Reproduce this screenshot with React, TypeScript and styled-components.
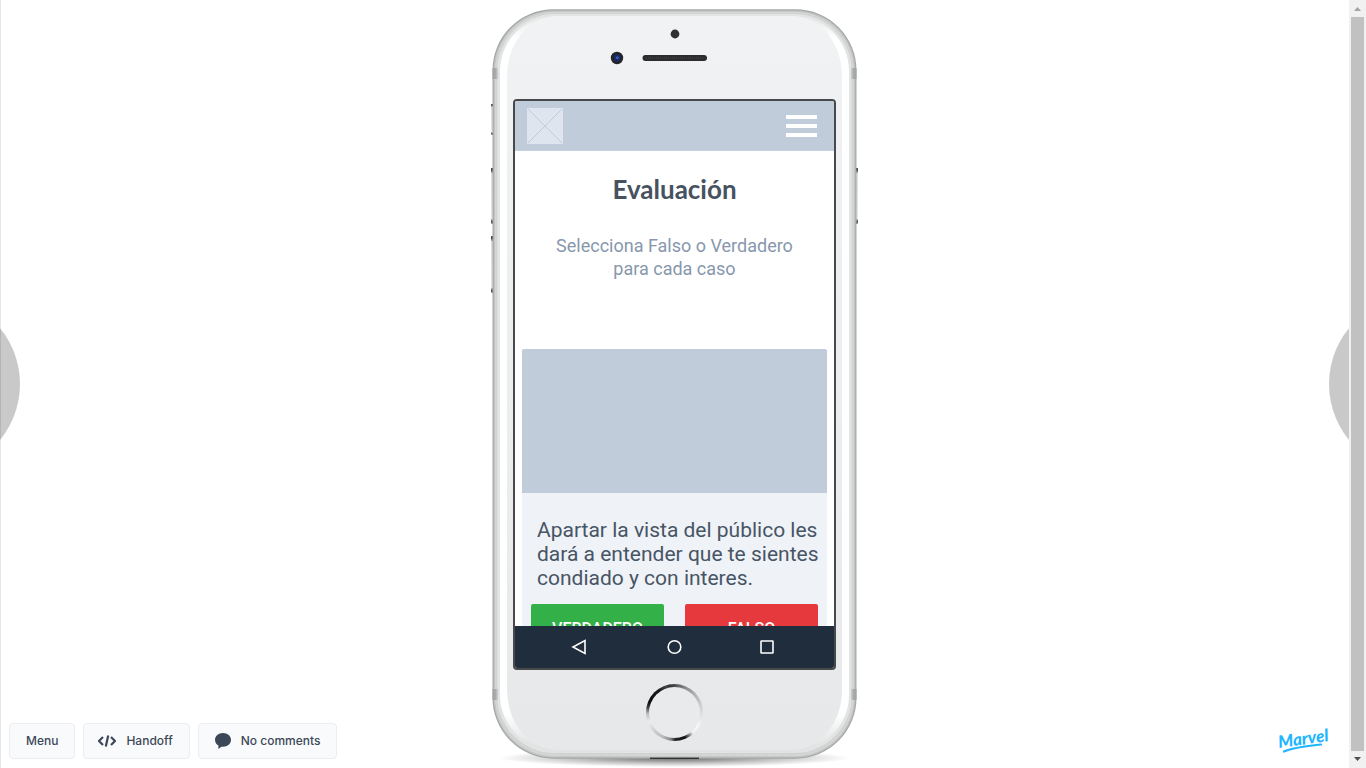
import React from "react";
import styled, { createGlobalStyle } from "styled-components";

const GlobalStyle = createGlobalStyle`
  *, *::before, *::after { box-sizing: border-box; }
  body { margin: 0; background: #fff; }
  button { font: inherit; color: inherit; border: 0; padding: 0; background: none; cursor: pointer; }
  h1, p { margin: 0; font-weight: inherit; }
`;

const Page = styled.div`
  display: flex;
  height: 100vh;
  overflow: hidden;
  font-family: Roboto, "Liberation Sans", sans-serif;
`;

const Stage = styled.main`
  position: relative;
  flex: 1;
  display: grid;
  grid-template-columns: 1fr auto 1fr;
  align-items: center;
  overflow: hidden;
  box-shadow: inset 1px 0 #e6e6e6;
`;

const PageTurn = styled.button<{ $side: "left" | "right" }>`
  position: absolute;
  top: calc(50% - 88px);
  ${(p) => p.$side}: -156px;
  width: 176px;
  height: 176px;
  border-radius: 50%;
  background: rgba(0, 0, 0, 0.21);
`;

const Toolbar = styled.nav`
  align-self: end;
  display: flex;
  gap: 8px;
  padding: 9px;
`;

const ToolButton = styled.button<{ $icon?: boolean }>`
  display: flex;
  align-items: center;
  gap: 9px;
  height: 36px;
  padding: 0 16px 0 ${(p) => (p.$icon ? 13 : 16)}px;
  border: 1px solid #ebedf0;
  border-radius: 4px;
  background: #f9fafc;
  color: #3c4858;
  font: 500 12px/16px Inter, "Liberation Sans", sans-serif;
  white-space: nowrap;
`;

const BrandLink = styled.a`
  align-self: end;
  justify-self: end;
  display: block;
  padding: 0 16px 9px 0;
  svg { display: block; overflow: visible; }
`;

const Device = styled.section`
  position: relative;
  display: flex;
  flex-direction: column;
  align-items: center;
  gap: 14px;
  width: 367px;
  height: 750px;
  padding-top: 90px;
`;

const Shell = styled.svg`
  position: absolute;
  inset: 0;
  overflow: visible;
`;

const Screen = styled.div`
  position: relative;
  display: flex;
  flex-direction: column;
  width: 323px;
  height: 571px;
  border: 2px solid #47494b;
  border-radius: 4px;
  background: #fff;
  overflow: hidden;
`;

const HomeButton = styled.button`
  position: relative;
  width: 57px;
  height: 57px;
  padding: 3px;
  border-radius: 50%;
  background: conic-gradient(
    #4a4a4a 0deg, #8d8d8d 25deg, #bbb 55deg, #dcdcdc 90deg, #f6f6f6 120deg,
    #f0f0f0 138deg, #777 148deg, #111 158deg, #222 178deg, #888 188deg,
    #bbb 205deg, #ccc 225deg, #eee 250deg, #bbb 268deg, #444 280deg,
    #0c0c0c 292deg, #1a1a1a 325deg, #444 342deg, #333 350deg, #4a4a4a 360deg
  );
  &::after {
    content: "";
    display: block;
    height: 100%;
    border-radius: 50%;
    background: #e9eaec;
  }
`;

const AppBar = styled.header`
  flex: none;
  display: flex;
  align-items: center;
  justify-content: space-between;
  height: 50px;
  padding: 0 17px 0 12px;
  background: #c0ccda;
  border-bottom: 1px solid #c6d1de;
  svg { display: block; }
`;

const MenuButton = styled.button`
  display: flex;
  flex-direction: column;
  gap: 5px;
  width: 31px;
`;

const MenuBar = styled.span`
  height: 4px;
  background: #fff;
`;

const Content = styled.div`
  flex: 1;
  min-height: 0;
  overflow: hidden;
  padding: 22px 7px 0;
`;

const Title = styled.h1`
  color: #475260;
  font: 700 26px/32px Lato, sans-serif;
  text-align: center;
`;

const Intro = styled.p`
  margin-top: 29px;
  color: #8797ad;
  font-size: 18px;
  line-height: 23px;
  text-align: center;
`;

const Card = styled.article`
  margin-top: 69px;
  border-radius: 2px;
  background: #eff2f7;
  overflow: hidden;
`;

const CardImage = styled.div`
  height: 144px;
  background: #c0ccda;
`;

const Statement = styled.p`
  padding: 25px 0 14px 15px;
  color: #475565;
  font-size: 21px;
  line-height: 24px;
  white-space: nowrap;
`;

const Answers = styled.div`
  display: grid;
  grid-template-columns: 1fr 1fr;
  gap: 21px;
  padding: 0 9px 16px;
`;

const Answer = styled.button<{ $color: string }>`
  height: 48px;
  border-radius: 2px;
  background: ${(p) => p.$color};
  color: #fff;
  font-size: 16px;
  font-weight: 500;
`;

const SystemBar = styled.nav`
  flex: none;
  display: flex;
  align-items: center;
  justify-content: space-between;
  height: 42px;
  padding: 0 58px 0 55px;
  background: #1f2d3d;
  svg { display: block; fill: none; stroke: #fff; stroke-width: 1.6; }
`;

const ScrollTrack = styled.div`
  flex: none;
  display: flex;
  flex-direction: column;
  align-items: center;
  width: 17px;
  background: #f1f1f1;
`;

const ScrollArrow = styled.button`
  height: 17px;
  svg { display: block; }
`;

const ScrollThumb = styled.div`
  flex: 1;
  width: 13px;
  background: #c1c1c1;
`;

function PhoneShell() {
  return (
    <Shell width="367" height="750" viewBox="0 0 367 750" aria-hidden="true">
      <defs>
        <linearGradient id="face" x2="0" y2="1">
          <stop offset="0" stopColor="#f1f2f4" />
          <stop offset="1" stopColor="#e7e8ea" />
        </linearGradient>
        <linearGradient id="gloss" x2="0" y2="1">
          <stop offset="0" stopColor="#e6e7e7" />
          <stop offset="0.03" stopColor="#fff" />
          <stop offset="0.95" stopColor="#fff" />
          <stop offset="1" stopColor="#dedfe0" />
        </linearGradient>
        <linearGradient id="bandLeft">
          <stop offset="0" stopColor="#a3a4a6" />
          <stop offset="0.5" stopColor="#a6a7a9" />
          <stop offset="1" stopColor="#cfd0d1" />
        </linearGradient>
        <linearGradient id="bandRight">
          <stop offset="0" stopColor="#cfd0d1" />
          <stop offset="0.5" stopColor="#a6a7a9" />
          <stop offset="1" stopColor="#a3a4a6" />
        </linearGradient>
        <linearGradient id="tip" x2="0" y2="1">
          <stop offset="0" stopColor="#222" />
          <stop offset="0.04" stopColor="#444" />
          <stop offset="0.1" stopColor="#ddd" />
          <stop offset="0.9" stopColor="#e6e6e6" />
          <stop offset="0.96" stopColor="#444" />
          <stop offset="1" stopColor="#999" />
        </linearGradient>
        <radialGradient id="shadow">
          <stop offset="0" stopColor="#000" stopOpacity="0.6" />
          <stop offset="0.6" stopColor="#000" stopOpacity="0.22" />
          <stop offset="1" stopColor="#000" stopOpacity="0" />
        </radialGradient>
      </defs>
      <ellipse cx="183" cy="749" rx="176" ry="9" fill="url(#shadow)" />
      <g fill="url(#tip)">
        <rect x="0" y="95" width="3" height="31" rx="1" />
        <rect x="0" y="159" width="3" height="56" rx="1" />
        <rect x="0" y="227" width="3" height="57" rx="1" />
        <rect x="364" y="159" width="3" height="56" rx="1" />
      </g>
      <rect x="1.5" y="0.3" width="364" height="749.4" rx="61" fill="#a6a7a7" />
      <rect x="2.7" y="1.5" width="361.6" height="747" rx="60" fill="#c2c3c3" />
      <rect x="4" y="2.8" width="359" height="744.4" rx="59" fill="#d4d5d5" />
      <rect x="5.2" y="4.2" width="356.6" height="741" rx="58" fill="#d0d1d1" />
      <rect x="6.2" y="5" width="354.6" height="739" rx="57" fill="#e2e3e3" />
      <rect x="9" y="7" width="349" height="734" rx="55" fill="url(#gloss)" />
      <path
        d="M66 7H301A50 60 0 0 1 351 67V681A50 60 0 0 1 301 741H66A50 60 0 0 1 16 681V67A50 60 0 0 1 66 7Z"
        fill="url(#face)"
      />
      <g fill="url(#bandLeft)">
        <rect x="1.5" y="59" width="5.5" height="11" />
        <rect x="1.5" y="680" width="5.5" height="11" />
      </g>
      <g fill="url(#bandRight)">
        <rect x="360" y="59" width="5.5" height="11" />
        <rect x="360" y="680" width="5.5" height="11" />
      </g>
      <rect x="159" y="748.6" width="49" height="1.4" fill="#333" />
      <circle cx="184" cy="25" r="4.4" fill="#2f3032" />
      <circle cx="126" cy="49" r="6.2" fill="#232427" />
      <circle cx="126" cy="49" r="3.4" fill="#1c2c6b" />
      <circle cx="126.3" cy="48.8" r="1.3" fill="#3e66c4" />
      <rect x="151.5" y="46" width="64.5" height="6" rx="3" fill="#2c2c2e" />
      <path d="M155 49H213" stroke="#3a3a3a" strokeWidth="2" strokeDasharray="1 1" />
    </Shell>
  );
}

export default function App() {
  return (
    <Page>
      <GlobalStyle />
      <Stage>
        <Toolbar aria-label="Prototype tools">
          <ToolButton>Menu</ToolButton>
          <ToolButton $icon>
            <svg width="20" height="12" viewBox="0 0 20 12" fill="none" stroke="#3c4858" strokeWidth="2.2" strokeLinejoin="round" aria-hidden="true">
              <path d="M6 2 2 6l4 4M14 2l4 4-4 4M11.200 .5 8.800 11.500" />
            </svg>
            Handoff
          </ToolButton>
          <ToolButton $icon>
            <svg width="20" height="16" viewBox="0 0 20 16" fill="#3c4858" aria-hidden="true">
              <path d="M11 0C6.400 0 3 3 3 6.800c0 2.600 1.300 4.600 3.400 5.800V16l3-2.300c.5.100 1 .1 1.600.1 4.600 0 8-3.200 8-7S15.600 0 11 0Z" />
            </svg>
            No comments
          </ToolButton>
        </Toolbar>

        <Device aria-label="Prototype">
          <PhoneShell />
          <Screen>
            <AppBar>
              <svg width="36" height="36" viewBox="0 0 36 36" aria-hidden="true">
                <rect width="36" height="36" rx="1" fill="#dee5ee" />
                <path d="M1 1 35 35M35 1 1 35" stroke="#c0ccda" />
              </svg>
              <MenuButton aria-label="Menú">
                <MenuBar />
                <MenuBar />
                <MenuBar />
              </MenuButton>
            </AppBar>
            <Content>
              <Title>Evaluación</Title>
              <Intro>
                Selecciona Falso o Verdadero
                <br />
                para cada caso
              </Intro>
              <Card>
                <CardImage />
                <Statement>
                  Apartar la vista del público les
                  <br />
                  dará a entender que te sientes
                  <br />
                  condiado y con interes.
                </Statement>
                <Answers>
                  <Answer $color="#34b049">VERDADERO</Answer>
                  <Answer $color="#e6393d">FALSO</Answer>
                </Answers>
              </Card>
            </Content>
            <SystemBar aria-label="System">
              <button aria-label="Back">
                <svg width="18" height="18" viewBox="0 0 18 18"><path d="M15 2.500V15.500L3 9Z" /></svg>
              </button>
              <button aria-label="Home">
                <svg width="18" height="18" viewBox="0 0 18 18"><circle cx="10.500" cy="9" r="6.300" /></svg>
              </button>
              <button aria-label="Recents">
                <svg width="18" height="18" viewBox="0 0 18 18"><rect x="3" y="3" width="12" height="12" rx="0.500" /></svg>
              </button>
            </SystemBar>
          </Screen>
          <HomeButton aria-label="Home button" />
        </Device>

        <BrandLink href="#" aria-label="Marvel">
          <svg width="57" height="36" viewBox="0 0 57 36">
            <text x="3" y="25" transform="rotate(-8 3 25)" fill="#1fb6ff" fontFamily="Lato, sans-serif" fontSize="17" fontWeight="900" fontStyle="italic">Marvel</text>
            <path d="M8 28.500C17 24.500 30 23 45 21.500" fill="none" stroke="#1fb6ff" strokeWidth="2.200" strokeLinecap="round" />
          </svg>
        </BrandLink>

        <PageTurn $side="left" aria-label="Previous screen" />
        <PageTurn $side="right" aria-label="Next screen" />
      </Stage>

      <ScrollTrack>
        <ScrollArrow aria-label="Scroll up">
          <svg width="17" height="17" viewBox="0 0 17 17"><path d="M5 11h7L8.500 7Z" fill="#a3a3a3" /></svg>
        </ScrollArrow>
        <ScrollThumb />
        <ScrollArrow aria-label="Scroll down">
          <svg width="17" height="17" viewBox="0 0 17 17"><path d="M5 6h7L8.500 10Z" fill="#505050" /></svg>
        </ScrollArrow>
      </ScrollTrack>
    </Page>
  );
}
